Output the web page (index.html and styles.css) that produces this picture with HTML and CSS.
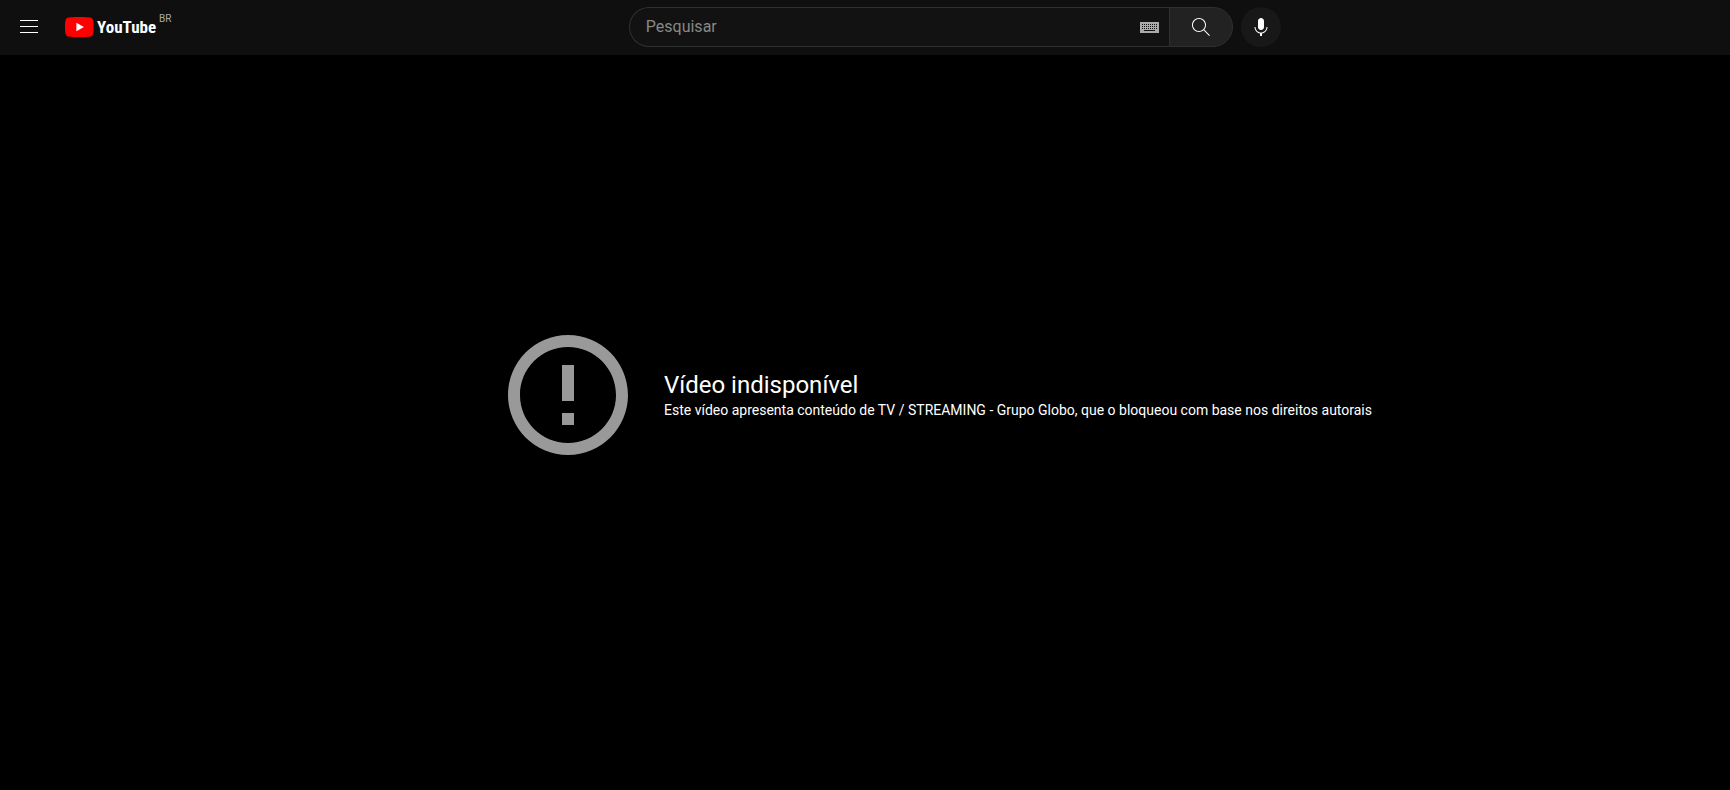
FILE: index.html
```html
<!DOCTYPE html>
<html lang="pt-BR">
<head>
<meta charset="utf-8">
<title>YouTube</title>
<link rel="stylesheet" href="styles.css">
</head>
<body>
<header class="masthead">
  <div class="masthead-start">
    <button class="icon-button menu-button" type="button" aria-label="Guia">
      <svg width="18" height="14" viewBox="0 0 18 14"><path fill="#fff" d="M0 0h18v1H0zM0 6h18v1H0zM0 12h18v1H0z"/></svg>
    </button>
    <a class="logo" href="#" aria-label="Página inicial do YouTube">
      <svg class="logo-mark" width="29" height="20" viewBox="0 0 29 20"><path fill="#f00" d="M28 3.1A3.6 3.6 0 0 0 25.400 .6C23.200 0 14.300 0 14.300 0S5.400 0 3.200 .6A3.600 3.600 0 0 0 .6 3.100C0 5.400 0 10 0 10s0 4.600 .6 6.900a3.600 3.600 0 0 0 2.600 2.500c2.200 .6 11.100 .6 11.100 .6s8.900 0 11.100-.6a3.600 3.600 0 0 0 2.600-2.500c.6-2.300 .6-6.900 .6-6.900s0-4.600-.6-6.900z"/><path fill="#fff" d="M11.400 5.700v8.600l7.500-4.300z"/></svg>
      <span class="logo-name">YouTube</span>
      <span class="logo-country">BR</span>
    </a>
  </div>
  <form class="search">
    <div class="search-box">
      <input class="search-input" type="text" placeholder="Pesquisar" aria-label="Pesquisar">
      <button class="icon-button" type="button" aria-label="Teclado virtual">
        <svg width="19" height="11" viewBox="0 0 19 11" shape-rendering="crispEdges"><path fill="#aaa" d="M0 0h19v11H0z"/><path stroke="#121212" stroke-dasharray="1 1" d="M2 2.500h16M2 4.500h16M2 6.500h16"/><path fill="#121212" d="M4 8h11v1H4z"/></svg>
      </button>
    </div>
    <button class="search-button" type="submit" aria-label="Pesquisar">
      <svg width="24" height="24" viewBox="0 0 24 24"><path fill="#fff" d="M20.870 20.170l-5.590-5.590C16.350 13.350 17 11.750 17 10c0-3.870-3.130-7-7-7s-7 3.130-7 7 3.130 7 7 7c1.750 0 3.350-.65 4.580-1.710l5.590 5.590.7-.71zM10 16c-3.310 0-6-2.690-6-6s2.690-6 6-6 6 2.690 6 6-2.690 6-6 6z"/></svg>
    </button>
    <button class="mic-button" type="button" aria-label="Pesquisar com sua voz">
      <svg width="24" height="24" viewBox="0 0 24 24"><path fill="#fff" d="M12 3c-1.660 0-3 1.370-3 3.070v5.860c0 1.700 1.340 3.070 3 3.070s3-1.370 3-3.070V6.070C15 4.370 13.660 3 12 3zM18.500 12h-1c0 3.030-2.470 5.500-5.500 5.500S6.500 15.030 6.500 12h-1c0 3.240 2.390 5.930 5.500 6.410V21h2v-2.590c3.110-.48 5.500-3.170 5.500-6.410z"/></svg>
    </button>
  </form>
</header>
<main class="player">
  <svg class="error-icon" width="144" height="144" viewBox="0 0 24 24"><path fill="#999" d="M11 15h2v2h-2zM11 7h2v6h-2zM12 2C6.480 2 2 6.480 2 12s4.480 10 10 10 10-4.480 10-10S17.520 2 12 2zm0 18c-4.420 0-8-3.580-8-8s3.580-8 8-8 8 3.580 8 8-3.580 8-8 8z"/></svg>
  <div class="error-text">
    <h1 class="error-title">Vídeo indisponível</h1>
    <p class="error-reason">Este vídeo apresenta conteúdo de TV / STREAMING - Grupo Globo, que o bloqueou com base nos direitos autorais</p>
  </div>
</main>
</body>
</html>
```
FILE: styles.css
```css
* {
  box-sizing: border-box;
}

body {
  margin: 0;
  background: #000;
  color: #fff;
  font-family: Roboto, Arial, sans-serif;
}

button {
  padding: 0;
  border: 0;
  background: none;
  cursor: pointer;
}

svg {
  display: block;
  flex: none;
}

.masthead {
  position: fixed;
  top: 0;
  left: 0;
  right: 0;
  display: grid;
  grid-template-columns: 7fr minmax(0, auto) 5fr;
  align-items: center;
  padding: 7px 0 8px;
  background: #0f0f0f;
}

.masthead-start {
  display: flex;
  align-items: center;
  gap: 27px;
  padding-left: 20px;
}

.icon-button {
  display: flex;
}

.logo {
  display: flex;
  align-items: center;
  gap: 3px;
  height: 26px;
  color: #fff;
  text-decoration: none;
}

.logo-name {
  font: 700 17px/20px "Roboto Condensed", "Open Sans Condensed", Roboto, sans-serif;
}

.logo-country {
  align-self: flex-start;
  color: #aaa;
  font-size: 10px;
  line-height: 10px;
}

.search {
  display: flex;
  width: 652px;
  max-width: 100%;
}

.search-box {
  display: flex;
  flex: 1;
  align-items: center;
  height: 40px;
  min-width: 0;
  padding: 0 10px 0 16px;
  border: 1px solid #303030;
  border-right: 0;
  border-radius: 20px 0 0 20px;
  background: #121212;
}

.search-input {
  flex: 1;
  min-width: 0;
  padding: 0;
  border: 0;
  outline: 0;
  background: none;
  color: #fff;
  font: 16px/24px Roboto, Arial, sans-serif;
}

.search-input::placeholder {
  color: #888;
}

.search-button {
  display: grid;
  place-items: center;
  width: 64px;
  border: 1px solid #303030;
  border-radius: 0 20px 20px 0;
  background: #222;
}

.mic-button {
  display: grid;
  place-items: center;
  width: 40px;
  margin-left: 8px;
  border-radius: 50%;
  background: #181818;
}

.player {
  display: flex;
  align-items: center;
  justify-content: center;
  gap: 24px;
  min-height: 100vh;
  padding-left: 138px;
}

.error-title {
  margin: 0;
  font-size: 24px;
  font-weight: 400;
  line-height: 30px;
}

.error-reason {
  margin: 0;
  font-size: 14px;
  line-height: 20px;
}
```
